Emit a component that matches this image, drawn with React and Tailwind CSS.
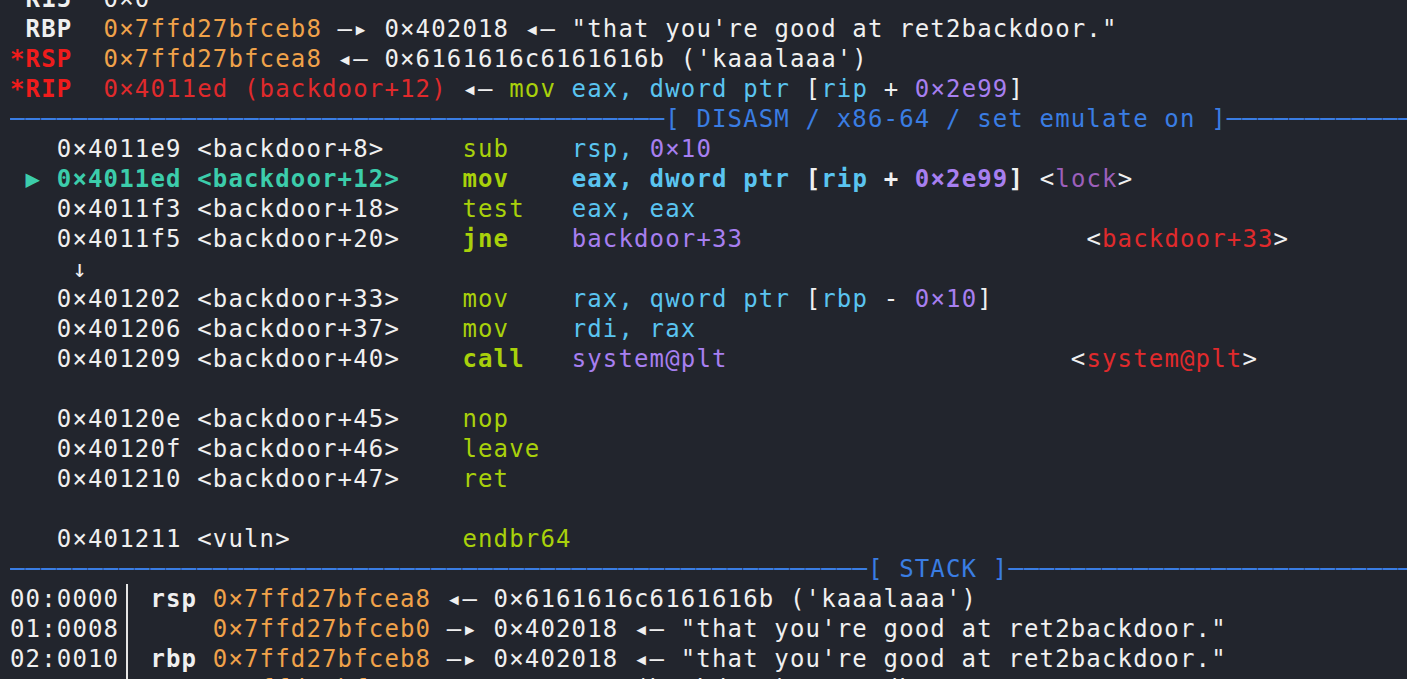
import React from "react";

// terminal palette
const W = "text-[#f0f0f0]";
const OR = "text-[#f0a24a]";
const RD = "text-[#e02a2c]";
const RB = "text-[#f01c1c] font-bold";
const YG = "text-[#a9d10b]";
const CY = "text-[#5ac4f0]";
const PU = "text-[#a77ff0]";
const TE = "text-[#3ccdab]";
const BL = "text-[#3a7de3]";
const MG = "text-[#9c5fba]";

const dashes = (n) => "─".repeat(n);

const Line = ({ parts }) => (
  <div className="h-[30px]">
    {parts.map(([text, cls], i) => (
      <span key={i} className={cls}>
        {text}
      </span>
    ))}
  </div>
);

const Header = ({ left, title }) => (
  <div className={`h-[30px] overflow-hidden ${BL}`}>
    {dashes(left)}[ {title} ]{dashes(90)}
  </div>
);

const Bar = () => (
  <span className="inline-block h-[30px] align-top ml-[7px] mr-[6.6px] border-l-2 border-[#e6e6e6]" />
);

const StackRow = ({ off, reg, parts }) => (
  <div className="h-[30px]">
    <span className={W}>{off}</span>
    <Bar />
    <span className={`${W} font-bold`}>{reg ? ` ${reg} ` : "     "}</span>
    {parts.map(([text, cls], i) => (
      <span key={i} className={cls}>
        {text}
      </span>
    ))}
  </div>
);

// one disasm row: marker, address, symbol, mnemonic, operands, annotation
const Asm = ({ cur, addr, sym, op, bold, args = [], note }) => {
  const pad = " ".repeat(Math.max(1, 29 - 3 - addr.length - 1 - sym.length));
  const head = cur ? `${TE} font-bold` : W;
  return (
    <div className="h-[30px]">
      <span className={TE}>{cur ? " ▶ " : "   "}</span>
      <span className={head}>
        {addr} {sym}
      </span>
      <span>{pad}</span>
      <span className={`${YG} ${bold ? "font-bold" : ""}`}>{op.padEnd(7, " ")}</span>
      {args.map(([text, cls], i) => (
        <span key={i} className={`${cls} ${cur ? "font-bold" : ""}`}>
          {text}
        </span>
      ))}
      {note}
    </div>
  );
};

const App = () => {
  return (
    <div className="h-[679px] w-full overflow-hidden bg-[#22252d] pl-[10px] font-['DejaVu_Sans_Mono',monospace] text-[24px] leading-[30px] tracking-[1.15px] whitespace-pre">
      <div className="-mt-[16px]">
        <Line parts={[[" R15  ", `${W} font-bold`], ["0×0", W]]} />
        <Line
          parts={[
            [" RBP  ", `${W} font-bold`],
            ["0×7ffd27bfceb8", OR],
            [' —▸ 0×402018 ◂— "that you\'re good at ret2backdoor."', W],
          ]}
        />
        <Line
          parts={[
            ["*RSP", RB],
            ["  ", W],
            ["0×7ffd27bfcea8", OR],
            [" ◂— 0×6161616c6161616b ('kaaalaaa')", W],
          ]}
        />
        <Line
          parts={[
            ["*RIP", RB],
            ["  ", W],
            ["0×4011ed (backdoor+12)", RD],
            [" ◂— ", W],
            ["mov", YG],
            [" eax, dword ptr ", CY],
            ["[", W],
            ["rip", CY],
            [" + ", W],
            ["0×2e99", PU],
            ["]", W],
          ]}
        />
        <Header left={42} title="DISASM / x86-64 / set emulate on" />

        <Asm addr="0×4011e9" sym="<backdoor+8>" op="sub" args={[["rsp, ", CY], ["0×10", PU]]} />
        <Asm
          cur
          addr="0×4011ed"
          sym="<backdoor+12>"
          op="mov"
          bold
          args={[
            ["eax, dword ptr ", CY],
            ["[", W],
            ["rip", CY],
            [" + ", W],
            ["0×2e99", PU],
            ["]", W],
          ]}
          note={
            <>
              <span className={W}> &lt;</span>
              <span className={MG}>lock</span>
              <span className={W}>&gt;</span>
            </>
          }
        />
        <Asm addr="0×4011f3" sym="<backdoor+18>" op="test" args={[["eax, eax", CY]]} />
        <Asm
          addr="0×4011f5"
          sym="<backdoor+20>"
          op="jne"
          bold
          args={[["backdoor+33", PU]]}
          note={
            <>
              <span className={W}>{" ".repeat(22)}&lt;</span>
              <span className={RD}>backdoor+33</span>
              <span className={W}>&gt;</span>
            </>
          }
        />
        <Line parts={[["    ↓", W]]} />
        <Asm
          addr="0×401202"
          sym="<backdoor+33>"
          op="mov"
          args={[
            ["rax, qword ptr ", CY],
            ["[", W],
            ["rbp", CY],
            [" - ", W],
            ["0×10", PU],
            ["]", W],
          ]}
        />
        <Asm addr="0×401206" sym="<backdoor+37>" op="mov" args={[["rdi, rax", CY]]} />
        <Asm
          addr="0×401209"
          sym="<backdoor+40>"
          op="call"
          bold
          args={[["system@plt", PU]]}
          note={
            <>
              <span className={W}>{" ".repeat(22)}&lt;</span>
              <span className={RD}>system@plt</span>
              <span className={W}>&gt;</span>
            </>
          }
        />
        <div className="h-[30px]" />
        <Asm addr="0×40120e" sym="<backdoor+45>" op="nop" />
        <Asm addr="0×40120f" sym="<backdoor+46>" op="leave" />
        <Asm addr="0×401210" sym="<backdoor+47>" op="ret" />
        <div className="h-[30px]" />
        <Asm addr="0×401211" sym="<vuln>" op="endbr64" />
        <Header left={55} title="STACK" />

        <StackRow
          off="00:0000"
          reg="rsp"
          parts={[
            ["0×7ffd27bfcea8", OR],
            [" ◂— 0×6161616c6161616b ('kaaalaaa')", W],
          ]}
        />
        <StackRow
          off="01:0008"
          parts={[
            ["0×7ffd27bfceb0", OR],
            [' —▸ 0×402018 ◂— "that you\'re good at ret2backdoor."', W],
          ]}
        />
        <StackRow
          off="02:0010"
          reg="rbp"
          parts={[
            ["0×7ffd27bfceb8", OR],
            [' —▸ 0×402018 ◂— "that you\'re good at ret2backdoor."', W],
          ]}
        />
        <StackRow
          off="03:0018"
          parts={[
            ["0×7ffd27bfcec0", OR],
            [" —▸ 0×4011e1 (backdoor) ◂— endbr64", W],
          ]}
        />
      </div>
    </div>
  );
};

export default App;
